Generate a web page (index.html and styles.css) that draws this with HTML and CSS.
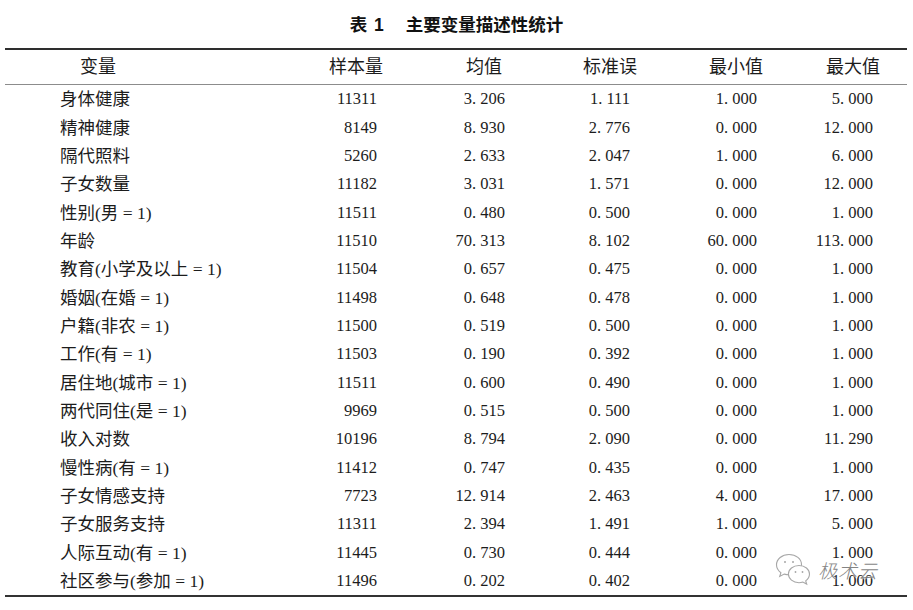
FILE: index.html
```html
<!DOCTYPE html>
<html lang="zh">
<head>
<meta charset="utf-8">
<title>表1 主要变量描述性统计</title>
<link rel="stylesheet" href="styles.css">
</head>
<body>
<div class="page">
  <h1 class="title"><span class="tno">表 1</span><span>主要变量描述性统计</span></h1>
  <div class="table">
    <div class="row head">
      <div class="c1 h1c">变量</div>
      <div class="num h2c">样本量</div>
      <div class="num h3c">均值</div>
      <div class="num h4c">标准误</div>
      <div class="num h5c">最小值</div>
      <div class="num h6c">最大值</div>
    </div>
    <div class="tbody">
      <div class="row"><div class="c1">身体健康</div><div class="num">11311</div><div class="num">3. 206</div><div class="num">1. 111</div><div class="num">1. 000</div><div class="num">5. 000</div></div>
      <div class="row"><div class="c1">精神健康</div><div class="num">8149</div><div class="num">8. 930</div><div class="num">2. 776</div><div class="num">0. 000</div><div class="num">12. 000</div></div>
      <div class="row"><div class="c1">隔代照料</div><div class="num">5260</div><div class="num">2. 633</div><div class="num">2. 047</div><div class="num">1. 000</div><div class="num">6. 000</div></div>
      <div class="row"><div class="c1">子女数量</div><div class="num">11182</div><div class="num">3. 031</div><div class="num">1. 571</div><div class="num">0. 000</div><div class="num">12. 000</div></div>
      <div class="row"><div class="c1">性别(男 = 1)</div><div class="num">11511</div><div class="num">0. 480</div><div class="num">0. 500</div><div class="num">0. 000</div><div class="num">1. 000</div></div>
      <div class="row"><div class="c1">年龄</div><div class="num">11510</div><div class="num">70. 313</div><div class="num">8. 102</div><div class="num">60. 000</div><div class="num">113. 000</div></div>
      <div class="row"><div class="c1">教育(小学及以上 = 1)</div><div class="num">11504</div><div class="num">0. 657</div><div class="num">0. 475</div><div class="num">0. 000</div><div class="num">1. 000</div></div>
      <div class="row"><div class="c1">婚姻(在婚 = 1)</div><div class="num">11498</div><div class="num">0. 648</div><div class="num">0. 478</div><div class="num">0. 000</div><div class="num">1. 000</div></div>
      <div class="row"><div class="c1">户籍(非农 = 1)</div><div class="num">11500</div><div class="num">0. 519</div><div class="num">0. 500</div><div class="num">0. 000</div><div class="num">1. 000</div></div>
      <div class="row"><div class="c1">工作(有 = 1)</div><div class="num">11503</div><div class="num">0. 190</div><div class="num">0. 392</div><div class="num">0. 000</div><div class="num">1. 000</div></div>
      <div class="row"><div class="c1">居住地(城市 = 1)</div><div class="num">11511</div><div class="num">0. 600</div><div class="num">0. 490</div><div class="num">0. 000</div><div class="num">1. 000</div></div>
      <div class="row"><div class="c1">两代同住(是 = 1)</div><div class="num">9969</div><div class="num">0. 515</div><div class="num">0. 500</div><div class="num">0. 000</div><div class="num">1. 000</div></div>
      <div class="row"><div class="c1">收入对数</div><div class="num">10196</div><div class="num">8. 794</div><div class="num">2. 090</div><div class="num">0. 000</div><div class="num">11. 290</div></div>
      <div class="row"><div class="c1">慢性病(有 = 1)</div><div class="num">11412</div><div class="num">0. 747</div><div class="num">0. 435</div><div class="num">0. 000</div><div class="num">1. 000</div></div>
      <div class="row"><div class="c1">子女情感支持</div><div class="num">7723</div><div class="num">12. 914</div><div class="num">2. 463</div><div class="num">4. 000</div><div class="num">17. 000</div></div>
      <div class="row"><div class="c1">子女服务支持</div><div class="num">11311</div><div class="num">2. 394</div><div class="num">1. 491</div><div class="num">1. 000</div><div class="num">5. 000</div></div>
      <div class="row"><div class="c1">人际互动(有 = 1)</div><div class="num">11445</div><div class="num">0. 730</div><div class="num">0. 444</div><div class="num">0. 000</div><div class="num">1. 000</div></div>
      <div class="row"><div class="c1">社区参与(参加 = 1)</div><div class="num">11496</div><div class="num">0. 202</div><div class="num">0. 402</div><div class="num">0. 000</div><div class="num">1. 000</div></div>
    </div>
  </div>
  <div class="watermark">
    <svg class="wx" width="38" height="34" viewBox="0 0 38 34" aria-hidden="true">
      <path d="M15 2.5c-7 0-12.5 4.6-12.5 10.3 0 3.2 1.7 6 4.4 7.9l-1.2 3.8 4.5-2.4c1.5.4 3.1.7 4.8.7 7 0 12.5-4.6 12.5-10.3S22 2.5 15 2.5z" fill="#fff" stroke="#a0a0a0" stroke-width="1.1"/>
      <circle cx="11" cy="10" r="1" fill="#a0a0a0"/>
      <circle cx="19" cy="10" r="1" fill="#a0a0a0"/>
      <path d="M25 13.5c-6 0-10.6 3.9-10.6 8.6s4.600 8.6 10.6 8.6c1.3 0 2.6-.2 3.8-.6l3.9 2-1-3.2c2.3-1.6 3.8-4 3.8-6.8 0-4.7-4.6-8.6-10.5-8.6z" fill="#fff" stroke="#a0a0a0" stroke-width="1.1"/>
      <circle cx="21.5" cy="20" r="0.9" fill="#a0a0a0"/>
      <circle cx="28.5" cy="20" r="0.9" fill="#a0a0a0"/>
    </svg>
    <span class="wm-text">极术云</span>
  </div>
</div>
</body>
</html>
```
FILE: styles.css
```css
html, body {
  margin: 0;
  padding: 0;
  background: #fff;
}

.page {
  position: relative;
  width: 913px;
  height: 610px;
  font-family: "Liberation Serif", "Noto Sans CJK SC", serif;
  color: #1c1c1c;
}

.title {
  margin: 0;
  padding-top: 13px;
  height: 24px;
  line-height: 24px;
  margin-bottom: 11px;
  text-align: center;
  font-family: "Liberation Sans", "Noto Sans CJK SC", sans-serif;
  font-size: 17.5px;
  font-weight: 700;
  color: #111;
  display: flex;
  justify-content: center;
  gap: 21px;
}

.tno {
  letter-spacing: 1px;
}

.table {
  margin: 0 6px 0 5px;
  border-top: 2px solid #2e2e2e;
}

.row {
  display: grid;
  grid-template-columns: 295px 77px 128px 125px 127px 116px;
  padding-right: 34px;
  height: 28.35px;
  align-items: center;
  font-size: 17.5px;
  line-height: 20px;
  white-space: nowrap;
}

.row.head {
  height: 34px;
  border-bottom: 1.5px solid #8c8c8c;
  font-size: 18px;
}

.tbody {
  border-bottom: 2px solid #333;
}

.c1 {
  padding-left: 55px;
}

.h1c {
  padding-left: 75px;
}

.num {
  text-align: right;
  font-size: 16.5px;
}

.head .num {
  font-size: 18px;
}

.h2c { margin-right: -6px; }
.h3c { margin-right: 3px; }
.h4c { margin-right: -7px; }
.h5c { margin-right: -6px; }
.h6c { margin-right: -7px; }

.watermark {
  position: absolute;
  left: 774px;
  top: 552px;
  display: flex;
  align-items: center;
  gap: 6px;
  opacity: 0.92;
}

.wm-text {
  font-family: "Noto Sans CJK SC", sans-serif;
  font-size: 19px;
  font-weight: 300;
  letter-spacing: 1px;
  color: #7a7a7a;
  font-style: italic;
  text-shadow: 0 0 2px #fff, 0 0 1px #fff;
}
```
